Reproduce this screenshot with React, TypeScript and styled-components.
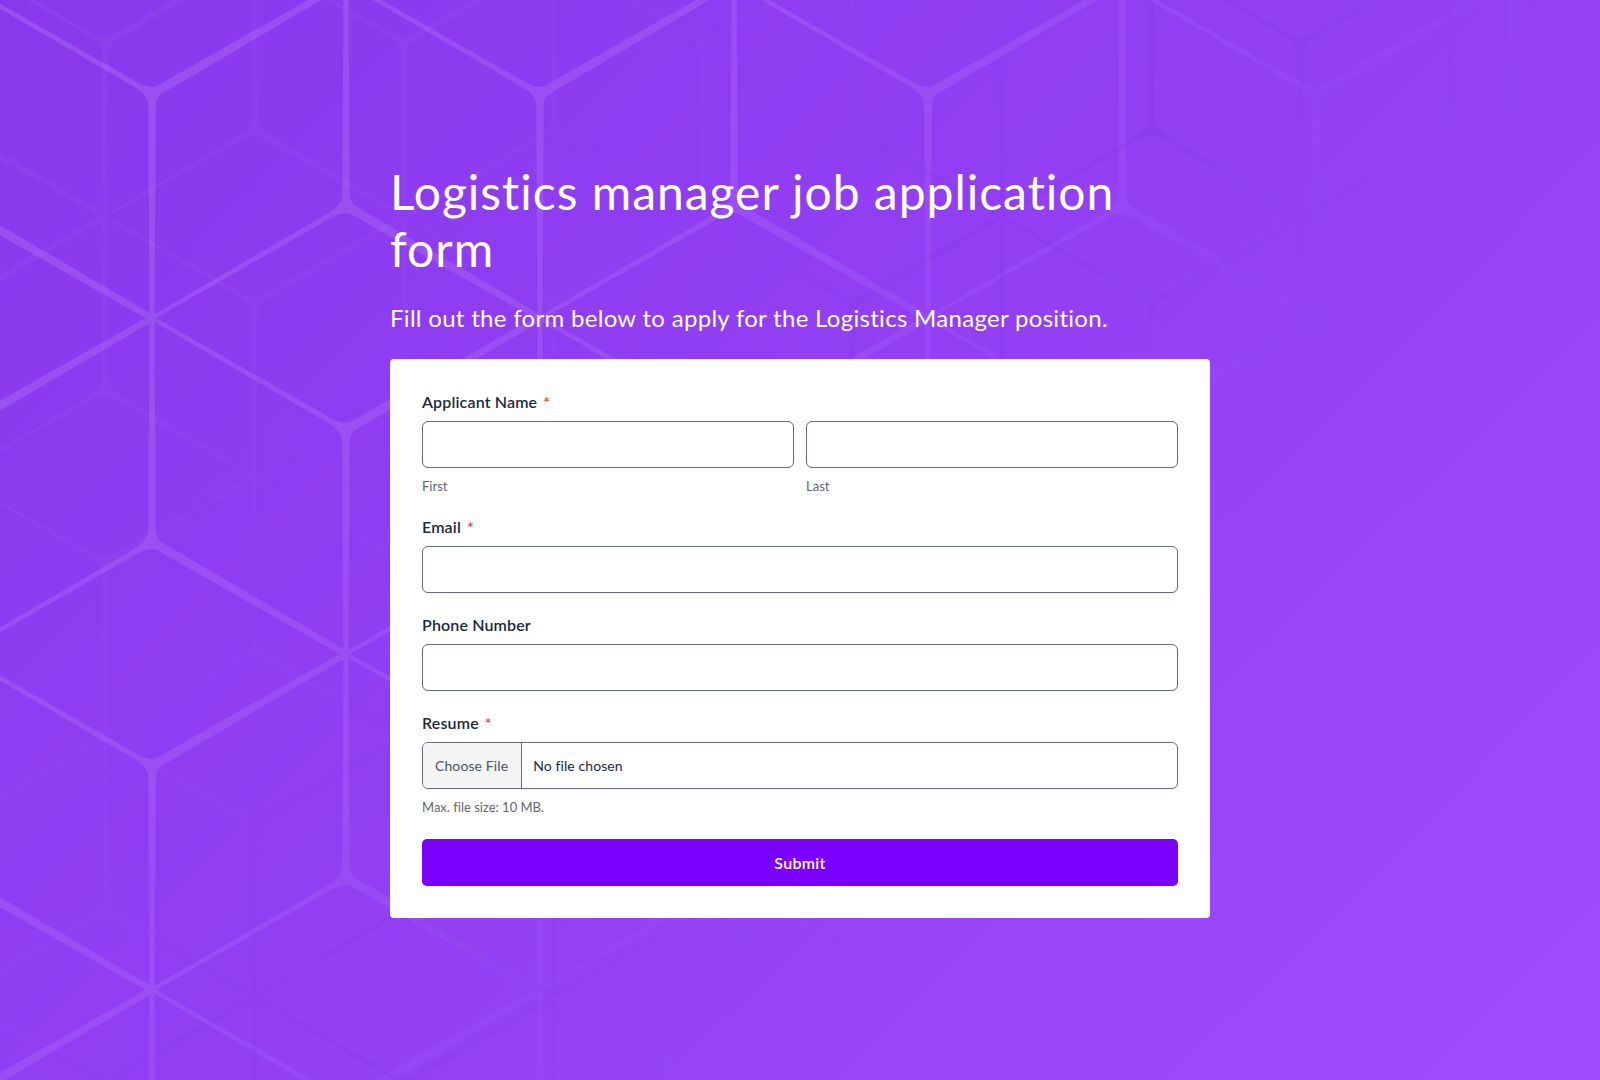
import React from "react";
import styled, { createGlobalStyle } from "styled-components";

const GlobalStyle = createGlobalStyle`
  html, body { margin: 0; padding: 0; }
  body {
    font-family: "Lato", "Noto Sans", sans-serif;
    font-variant-ligatures: none;
    background: #9340f5;
  }
`;

const Page = styled.main`
  position: relative;
  min-height: 1080px;
  overflow: hidden;
  background: linear-gradient(135deg, #8938ec 0%, #9340f5 50%, #9f4cff 100%);
`;

const Pattern = styled.svg`
  position: absolute;
  inset: 0;
  width: 1600px;
  height: 1080px;
`;

const Column = styled.div`
  position: relative;
  width: 820px;
  margin: 0 auto;
  padding-top: 163px;
`;

const Title = styled.h1`
  max-width: 760px;
  margin: 0 0 26px;
  font-size: 48px;
  line-height: 57px;
  font-weight: 400;
  letter-spacing: 0.97px;
  color: #fff;
`;

const Subtitle = styled.p`
  margin: 0 0 27px;
  font-size: 24px;
  line-height: 29px;
  font-weight: 400;
  letter-spacing: 0.3px;
  color: #fff;
`;

const Card = styled.form`
  display: flex;
  flex-direction: column;
  gap: 22px;
  box-sizing: border-box;
  padding: 33px 32px 32px;
  border-radius: 4px;
  background: #fff;
`;

const Field = styled.div`
  display: flex;
  flex-direction: column;
`;

const Label = styled.label`
  display: block;
  margin-bottom: 10px;
  font-size: 16px;
  line-height: 19px;
  font-weight: 600;
  letter-spacing: 0.15px;
  color: #1a2a40;
`;

const Required = styled.span`
  margin-left: 6px;
  font-weight: 500;
  color: #d8432b;
`;

const Row = styled.div`
  display: grid;
  grid-template-columns: 1fr 1fr;
  gap: 12px;
`;

const Input = styled.input`
  display: block;
  box-sizing: border-box;
  width: 100%;
  height: 47px;
  border: 1px solid #656b7c;
  border-radius: 6px;
  background: #fff;
  box-shadow: 0 1px 2px rgba(0, 0, 0, 0.05);
`;

const FileInput = styled.input`
  display: block;
  box-sizing: border-box;
  width: 100%;
  height: 47px;
  padding: 0;
  border: 1px solid #656b7c;
  border-radius: 6px;
  background: #fff;
  box-shadow: 0 1px 2px rgba(0, 0, 0, 0.05);
  font-family: "Lato", sans-serif;
  font-size: 14px;
  letter-spacing: 0.1px;
  color: #1a2a40;

  &::file-selector-button {
    height: 100%;
    margin-right: 11px;
    padding: 0 13px 0 12px;
    border: 0;
    border-right: 1px solid #656b7c;
    background: #f4f4f5;
    font-family: "Lato", sans-serif;
    font-size: 14px;
    letter-spacing: 0.1px;
    color: #4b5563;
  }
`;

const Hint = styled.div`
  margin-top: 9px;
  font-size: 13px;
  line-height: 18px;
  color: #5f6673;
`;

const Submit = styled.button`
  display: block;
  height: 47px;
  margin-top: 1px;
  border: 0;
  border-radius: 5px;
  background: #7a00ff;
  box-shadow: 0 1px 2px rgba(0, 0, 0, 0.05);
  font-family: "Lato", sans-serif;
  font-size: 16px;
  font-weight: 600;
  letter-spacing: 0.3px;
  color: #fff;
`;

interface GridSpec {
  ox: number;
  oy: number;
  dx: number;
  dy: number;
  cols: number;
  radius: number;
  wideEnd: number;
  narrowEnd: number;
}

const DIRS: [number, number][] = [
  [0, -2], [1, -1], [1, 1], [0, 2], [-1, 1], [-1, -1],
];

function fix(n: number) {
  return Math.round(n * 10) / 10;
}

function rhombille(spec: GridSpec) {
  const { ox, oy, dx, dy, cols, radius, wideEnd, narrowEnd } = spec;
  const spokes: string[] = [];
  const fillets: string[] = [];
  const cls = (i: number, j: number) => (((j + 3 * i) / 2) % 3 + 3) % 3;
  const pos = (i: number, j: number): [number, number] => [ox + dx * i, oy + dy * j];
  for (let i = -2; i <= cols; i++) {
    for (let j = -6; j <= 18; j++) {
      if ((i + j) % 2 !== 0) continue;
      const k = cls(i, j);
      const [x, y] = pos(i, j);
      if (k === 1) {
        DIRS.forEach(([a, b], d) => {
          const [nx, ny] = pos(i + a, j + b);
          const len = Math.hypot(nx - x, ny - y);
          const px = -(ny - y) / len;
          const py = (nx - x) / len;
          // the two spokes running out to the left of a star are the heavy ones
          const boost = d === 4 || d === 5 ? 1.25 : d === 1 || d === 2 ? 0.8 : 1;
          const a0 = (narrowEnd * boost) / 2;
          const a1 = (wideEnd * boost) / 2;
          spokes.push(
            `M${fix(x + px * a0)} ${fix(y + py * a0)}L${fix(nx + px * a1)} ${fix(ny + py * a1)}` +
              `L${fix(nx - px * a1)} ${fix(ny - py * a1)}L${fix(x - px * a0)} ${fix(y - py * a0)}Z`
          );
        });
      } else {
        const use = k === 0 ? [5, 1, 3] : [0, 2, 4];
        const ends = use.map((d) => {
          const [a, b] = DIRS[d];
          const [nx, ny] = pos(i + a, j + b);
          const len = Math.hypot(nx - x, ny - y);
          return [x + ((nx - x) / len) * radius, y + ((ny - y) / len) * radius];
        });
        for (let m = 0; m < 3; m++) {
          const p = ends[m];
          const q = ends[(m + 1) % 3];
          fillets.push(`M${fix(p[0])} ${fix(p[1])}Q${fix(x)} ${fix(y)} ${fix(q[0])} ${fix(q[1])}`);
        }
      }
    }
  }
  return { spokes: spokes.join(""), fillets: fillets.join("") };
}

const bright = rhombille({ ox: 152, oy: 94, dx: 194, dy: 112, cols: 9, radius: 16, wideEnd: 7.5, narrowEnd: 5 });
const faint = rhombille({ ox: 105, oy: 43, dx: 149.5, dy: 86.7, cols: 11, radius: 14, wideEnd: 6, narrowEnd: 4 });

function Background() {
  return (
    <Pattern viewBox="0 0 1600 1080" aria-hidden="true">
      <defs>
        <linearGradient id="brightFade" gradientUnits="userSpaceOnUse" x1="0" y1="0" x2="960" y2="830">
          <stop offset="0" stopColor="#fff" stopOpacity="0.13" />
          <stop offset="0.6" stopColor="#fff" stopOpacity="0.085" />
          <stop offset="0.84" stopColor="#fff" stopOpacity="0.022" />
          <stop offset="1" stopColor="#fff" stopOpacity="0" />
        </linearGradient>
        <linearGradient id="faintFade" gradientUnits="userSpaceOnUse" x1="0" y1="0" x2="960" y2="830">
          <stop offset="0" stopColor="#fff" stopOpacity="0.045" />
          <stop offset="0.5" stopColor="#fff" stopOpacity="0.012" />
          <stop offset="0.6" stopColor="#4a109c" stopOpacity="0.02" />
          <stop offset="0.75" stopColor="#4a109c" stopOpacity="0.07" />
          <stop offset="0.85" stopColor="#4a109c" stopOpacity="0.03" />
          <stop offset="0.95" stopColor="#4a109c" stopOpacity="0" />
        </linearGradient>
        <mask id="faintShape" maskUnits="userSpaceOnUse" x="0" y="0" width="1600" height="1080">
          <path d={faint.spokes} fill="#fff" />
          <path d={faint.fillets} fill="none" stroke="#fff" strokeWidth="5" />
        </mask>
        <mask id="brightShape" maskUnits="userSpaceOnUse" x="0" y="0" width="1600" height="1080">
          <path d={bright.spokes} fill="#fff" />
          <path d={bright.fillets} fill="none" stroke="#fff" strokeWidth="6" />
        </mask>
      </defs>
      <rect width="1600" height="1080" fill="url(#faintFade)" mask="url(#faintShape)" />
      <rect width="1600" height="1080" fill="url(#brightFade)" mask="url(#brightShape)" />
    </Pattern>
  );
}

export default function App() {
  return (
    <Page>
      <GlobalStyle />
      <Background />
      <Column>
        <Title>Logistics manager job application form</Title>
        <Subtitle>Fill out the form below to apply for the Logistics Manager position.</Subtitle>
        <Card onSubmit={(e) => e.preventDefault()}>
          <Field>
            <Label>Applicant Name<Required>*</Required></Label>
            <Row>
              <div>
                <Input type="text" aria-label="First" />
                <Hint>First</Hint>
              </div>
              <div>
                <Input type="text" aria-label="Last" />
                <Hint>Last</Hint>
              </div>
            </Row>
          </Field>
          <Field>
            <Label>Email<Required>*</Required></Label>
            <Input type="email" />
          </Field>
          <Field>
            <Label>Phone Number</Label>
            <Input type="tel" />
          </Field>
          <Field>
            <Label>Resume<Required>*</Required></Label>
            <FileInput type="file" />
            <Hint>Max. file size: 10 MB.</Hint>
          </Field>
          <Submit type="submit">Submit</Submit>
        </Card>
      </Column>
    </Page>
  );
}
